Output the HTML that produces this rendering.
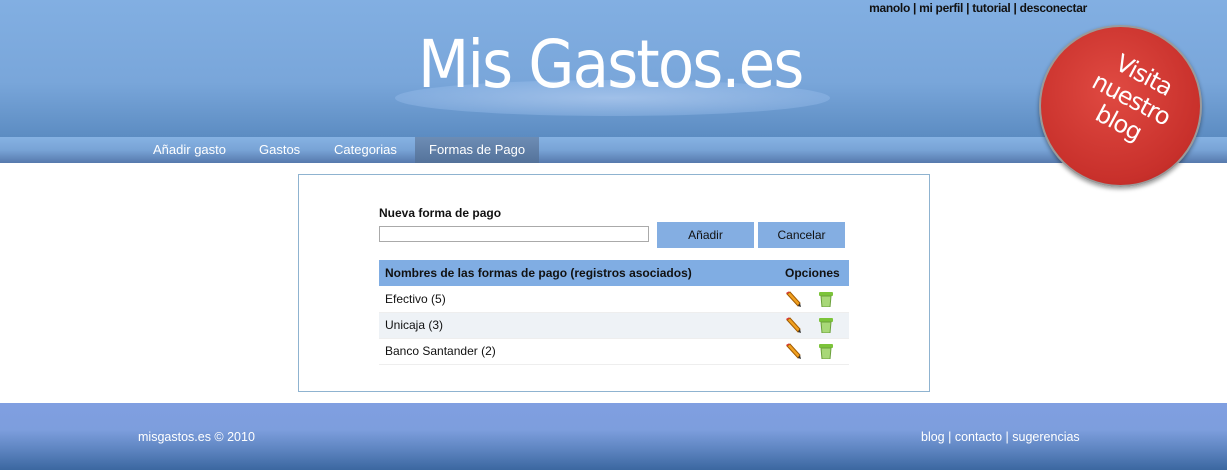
<!DOCTYPE html>
<html><head><meta charset="utf-8"><style>
*{margin:0;padding:0;box-sizing:border-box}
body{width:1227px;height:470px;overflow:hidden;background:#fff;font-family:"Liberation Sans",sans-serif;position:relative}
.hdr{position:absolute;left:0;top:0;width:1227px;height:137px;background:linear-gradient(#82afe2,#79a6da 60%,#5c8cc2)}
.nav{position:absolute;left:0;top:137px;width:1227px;height:26px;background:linear-gradient(#86b2e3,#78a3d6 50%,#5679ac)}
.nav span{position:absolute;top:5px;color:#fff;font-size:13px}
.act{position:absolute;left:415px;top:137px;width:124px;height:26px;background:linear-gradient(#6d8db5,#54729a)}
.top{position:absolute;right:140px;top:1px;font-size:12px;font-weight:bold;color:#111;letter-spacing:-0.3px}
.logo{position:absolute;left:418px;top:26px;font-size:66px;color:#fff;font-family:"DejaVu Sans",sans-serif;letter-spacing:-2px;transform:scaleX(0.9);transform-origin:left}
.ell{position:absolute;left:395px;top:80px;width:435px;height:36px;border-radius:50%;background:radial-gradient(ellipse,rgba(200,220,250,.55),rgba(160,195,240,.35) 70%,rgba(160,195,240,.1) 100%)}
.circ{position:absolute;left:1039px;top:25px;width:163px;height:162px;border-radius:50%;background:radial-gradient(circle at 45% 40%,#e04a42,#c8302b 70%,#a82420);border:2px solid #9a9a9a;box-shadow:0 2px 4px rgba(0,0,0,.4)}
.circ div{position:absolute;color:#fff;font-size:24px;font-family:"DejaVu Sans",sans-serif;transform:rotate(28deg);text-align:center;line-height:27px;left:35px;top:32px;width:110px;letter-spacing:-1px}
.box{position:absolute;left:298px;top:174px;width:632px;height:218px;border:1px solid #8fb3d0}
.lbl{position:absolute;left:379px;top:206px;font-size:12px;font-weight:bold;color:#111}
.inp{position:absolute;left:379px;top:226px;width:270px;height:16px;border:1px solid #aaa}
.btn{position:absolute;top:222px;height:26px;background:#84aee2;font-size:12px;text-align:center;line-height:26px;color:#111}
table{position:absolute;left:379px;top:260px;width:470px;border-collapse:collapse;font-size:12px;color:#111}
th{background:#80ade3;height:26px;text-align:left;padding-left:6px;font-weight:bold}
td{height:26px;padding-left:6px;border-bottom:1px solid #eee}
tr:nth-child(3) td{background:#eef2f6}
td svg{vertical-align:middle}
.ft{position:absolute;left:0;top:403px;width:1227px;height:67px;background:linear-gradient(#809fe1,#7d9edd 40%,#5d84c0 70%,#3b67a0)}
.ft span{position:absolute;top:27px;color:#fff;font-size:12.5px}
</style></head><body>
<div class="hdr"></div>
<div class="ell"></div>
<div class="logo">Mis Gastos.es</div>
<div class="top">manolo | mi perfil | tutorial | desconectar</div>
<div class="nav"></div>
<div class="act"></div>
<div class="nav" style="background:none"><span style="left:153px">Añadir gasto</span><span style="left:259px">Gastos</span><span style="left:334px">Categorias</span><span style="left:429px">Formas de Pago</span></div>
<div class="circ"><div>Visita<br>nuestro<br>blog</div></div>
<div class="box"></div>
<div class="lbl">Nueva forma de pago</div>
<div class="inp"></div>
<div class="btn" style="left:657px;width:97px">Añadir</div>
<div class="btn" style="left:758px;width:87px">Cancelar</div>
<table>
<tr><th>Nombres de las formas de pago (registros asociados)</th><th style="width:70px">Opciones</th></tr>
<tr><td>Efectivo (5)</td><td><svg width="16" height="16"><path d="M2 3 L5 1 L15 12 L13 15 Z" fill="#f0a020" stroke="#a05a00" stroke-width="1"/><path d="M2 3 L5 1 L3.5 0.5 L1 2Z" fill="#d33"/><path d="M13 15 L15 12 L16 16Z" fill="#333"/></svg><svg width="16" height="16" style="margin-left:17px"><rect x="1" y="1" width="14" height="4" rx="1" fill="#7cc43a"/><path d="M3 5 H13 L12 16 H4 Z" fill="#a8d878" stroke="#6aa03a"/></svg></td></tr>
<tr><td>Unicaja (3)</td><td><svg width="16" height="16"><path d="M2 3 L5 1 L15 12 L13 15 Z" fill="#f0a020" stroke="#a05a00" stroke-width="1"/><path d="M2 3 L5 1 L3.5 0.5 L1 2Z" fill="#d33"/><path d="M13 15 L15 12 L16 16Z" fill="#333"/></svg><svg width="16" height="16" style="margin-left:17px"><rect x="1" y="1" width="14" height="4" rx="1" fill="#7cc43a"/><path d="M3 5 H13 L12 16 H4 Z" fill="#a8d878" stroke="#6aa03a"/></svg></td></tr>
<tr><td>Banco Santander (2)</td><td><svg width="16" height="16"><path d="M2 3 L5 1 L15 12 L13 15 Z" fill="#f0a020" stroke="#a05a00" stroke-width="1"/><path d="M2 3 L5 1 L3.5 0.5 L1 2Z" fill="#d33"/><path d="M13 15 L15 12 L16 16Z" fill="#333"/></svg><svg width="16" height="16" style="margin-left:17px"><rect x="1" y="1" width="14" height="4" rx="1" fill="#7cc43a"/><path d="M3 5 H13 L12 16 H4 Z" fill="#a8d878" stroke="#6aa03a"/></svg></td></tr>
</table>
<div class="ft"><span style="left:138px">misgastos.es © 2010</span><span style="left:921px">blog | contacto | sugerencias</span></div>
</body></html>
